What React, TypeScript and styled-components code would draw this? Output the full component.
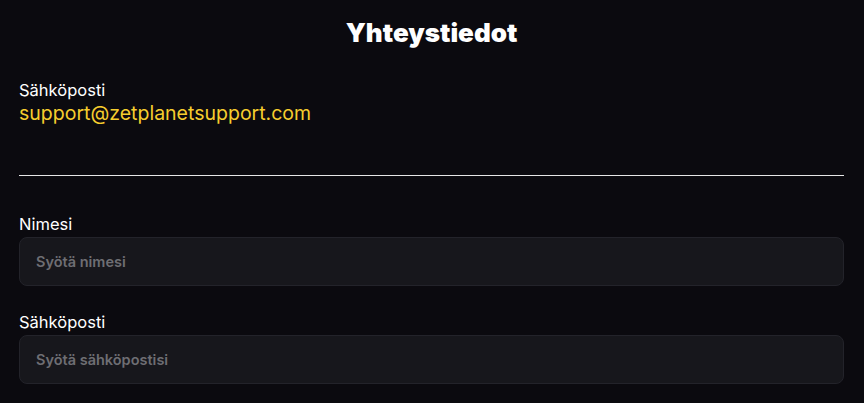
import styled, { createGlobalStyle } from "styled-components";

const GlobalStyle = createGlobalStyle`
  html, body {
    margin: 0;
    padding: 0;
    background: #0b0a0f;
  }
  body {
    font-family: Inter, "Noto Sans", sans-serif;
    color: #ffffff;
  }
`;

const Page = styled.section`
  padding: 16px 20px 0 19px;
`;

const Title = styled.h2`
  margin: 0;
  text-align: center;
  font-size: 26px;
  font-weight: 900;
  line-height: 34px;
`;

const ContactBlock = styled.div`
  margin-top: 30px;
  padding-bottom: 49px;
  border-bottom: 1px solid #e6e6e6;
`;

const Label = styled.div`
  font-size: 16.5px;
  line-height: 20px;
  font-weight: 400;
`;

const Email = styled.a`
  display: block;
  color: #f6cd2e;
  font-size: 19.5px;
  line-height: 26px;
  text-decoration: none;
`;

const Form = styled.form`
  margin-top: 38px;
  display: flex;
  flex-direction: column;
  gap: 26px;
`;

const Field = styled.label`
  display: flex;
  flex-direction: column;
  gap: 3px;
`;

const Input = styled.input`
  box-sizing: border-box;
  height: 49px;
  width: 100%;
  padding: 0 16px;
  background: #17171c;
  border: 1px solid #23232a;
  border-radius: 8px;
  color: #fff;
  font-family: inherit;
  font-size: 14.5px;
  font-weight: 600;
  outline: none;

  &::placeholder {
    color: #6e6e73;
  }
`;

export default function App() {
  return (
    <>
      <GlobalStyle />
      <Page>
        <Title>Yhteystiedot</Title>
        <ContactBlock>
          <Label>Sähköposti</Label>
          <Email href="mailto:support@zetplanetsupport.com">support@zetplanetsupport.com</Email>
        </ContactBlock>
        <Form>
          <Field>
            <Label>Nimesi</Label>
            <Input type="text" placeholder="Syötä nimesi" />
          </Field>
          <Field>
            <Label>Sähköposti</Label>
            <Input type="email" placeholder="Syötä sähköpostisi" />
          </Field>
        </Form>
      </Page>
    </>
  );
}
